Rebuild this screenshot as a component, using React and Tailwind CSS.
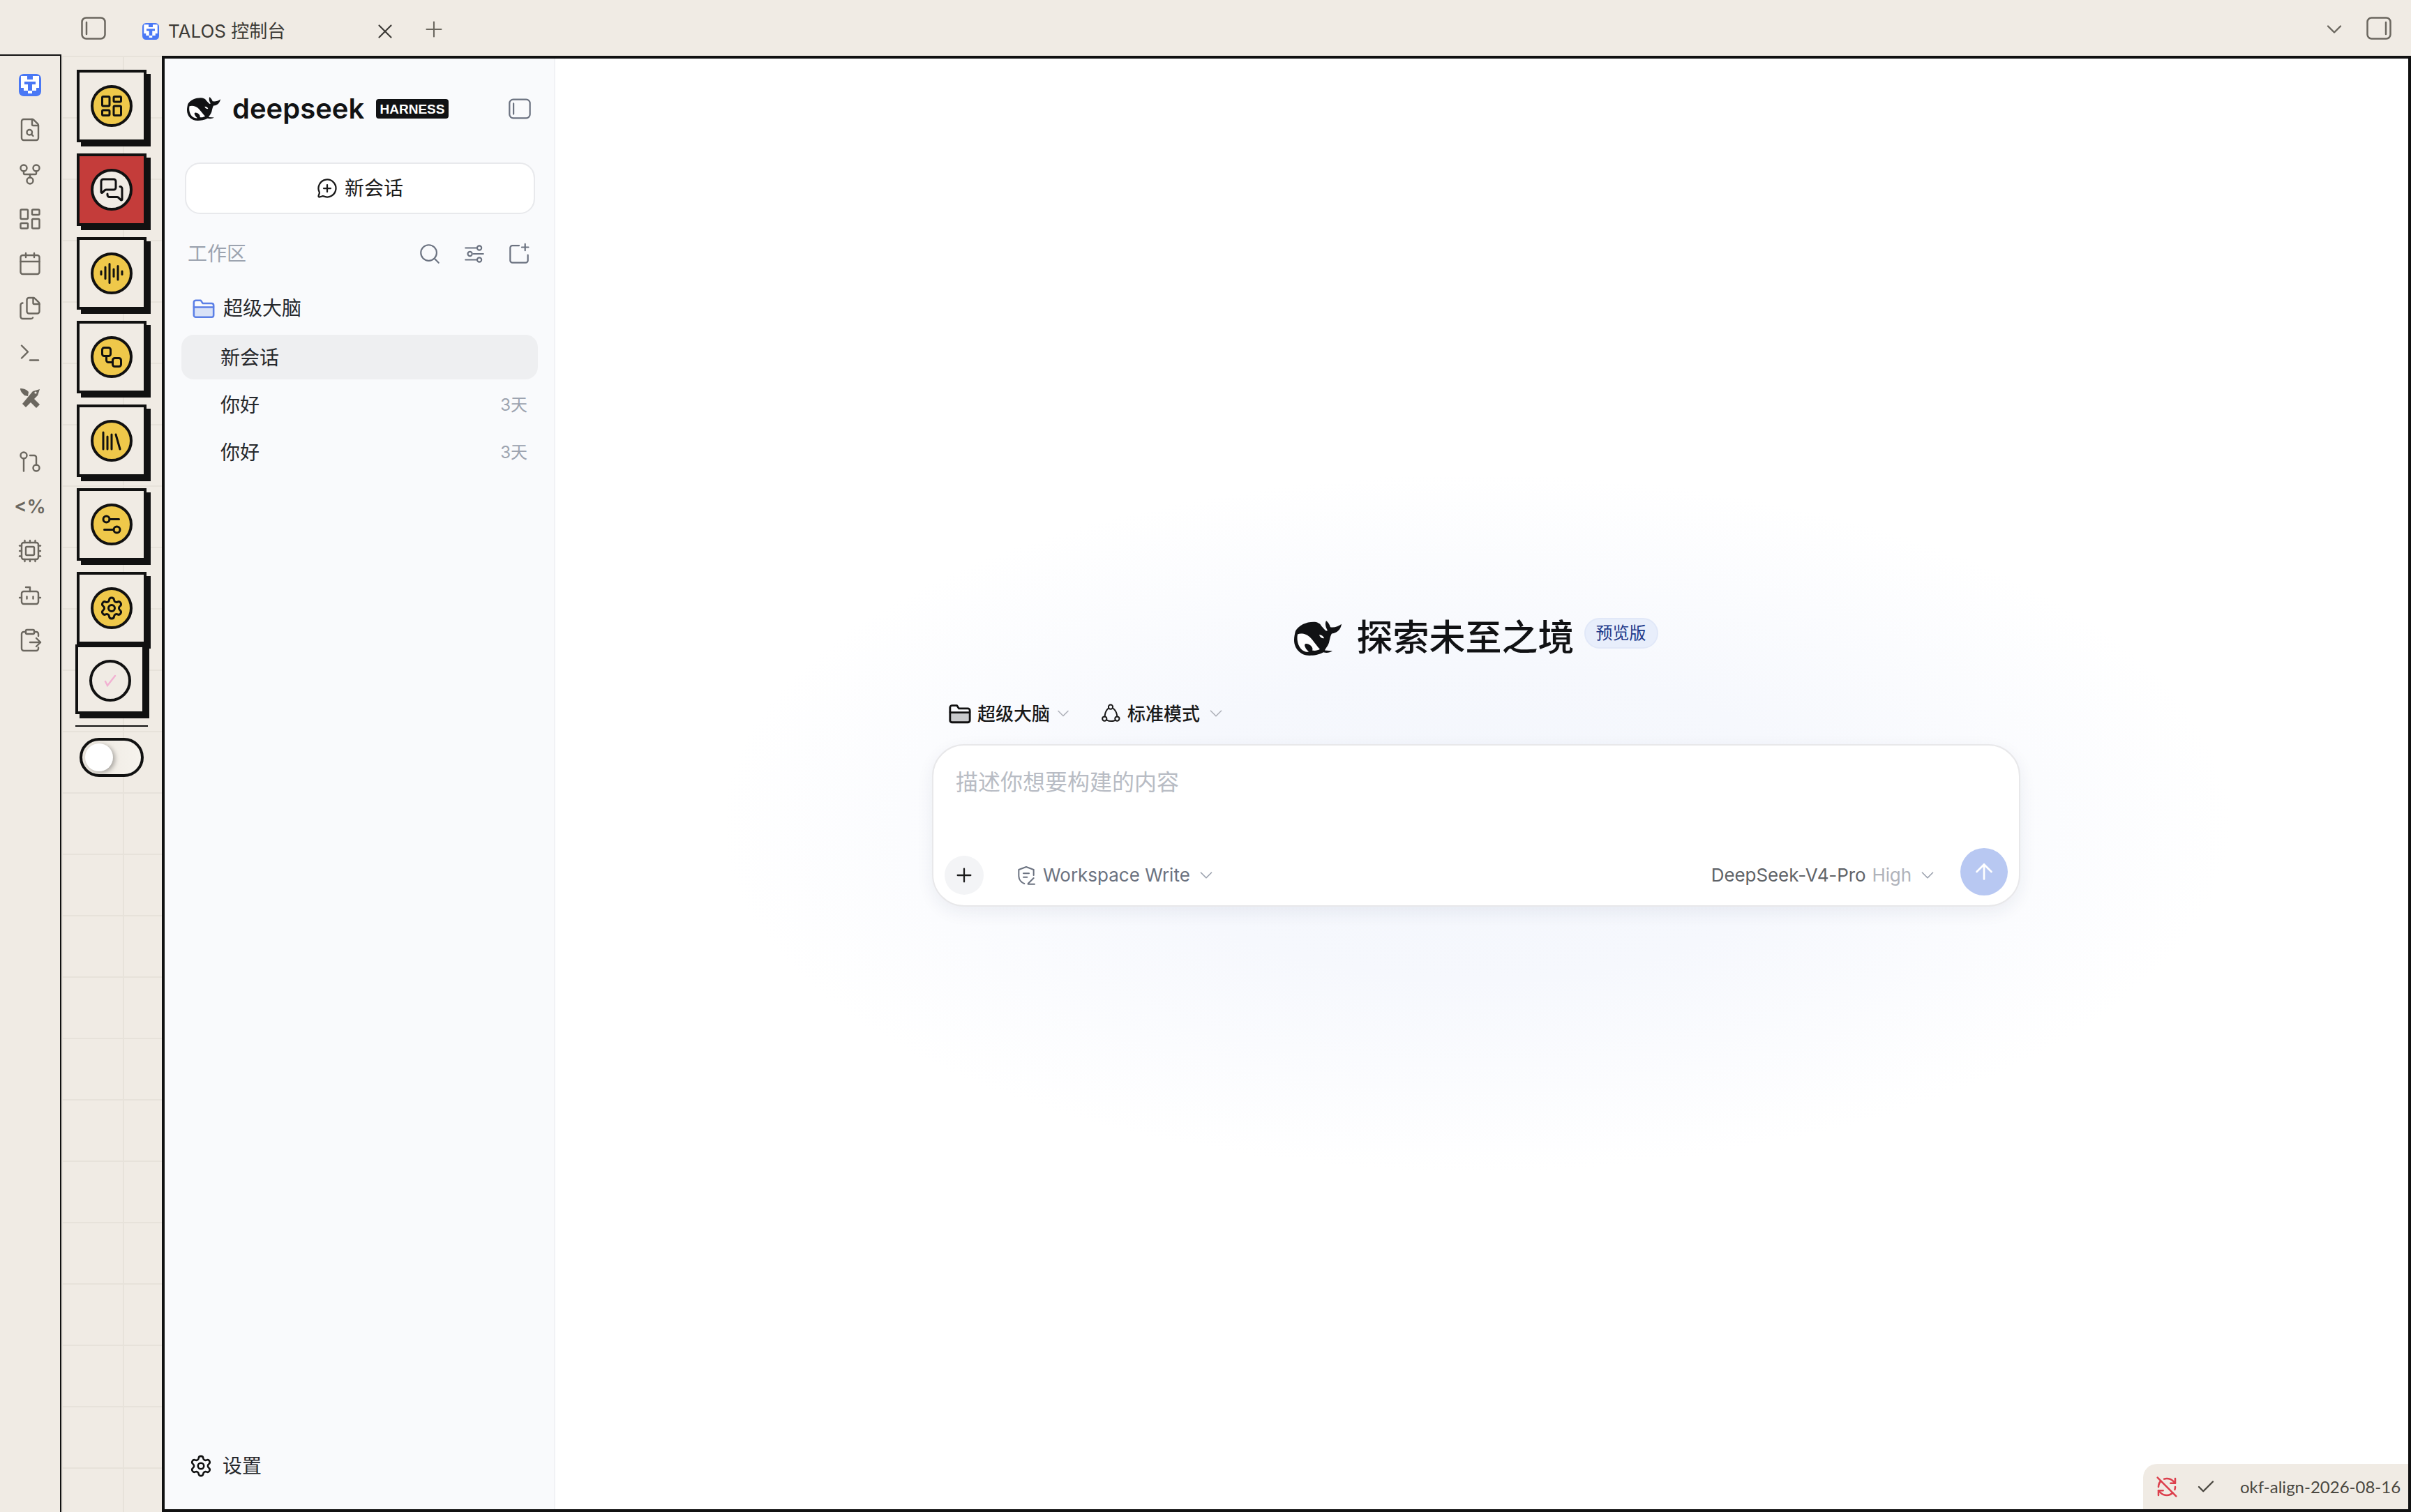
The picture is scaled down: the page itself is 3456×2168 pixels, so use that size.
import React from "react";
import {
  FileSearch, GitFork, LayoutDashboard, Calendar, Files, Terminal, Cpu, Bot,
  MessagesSquare, AudioLines, Workflow, Library, Settings2, Settings, X, Plus,
  ChevronDown, MessageCirclePlus, Search, RefreshCwOff, Check, ArrowUp,
} from "lucide-react";

const Whale = ({ className }) => (
  <svg viewBox="0 0 68 54" preserveAspectRatio="none" className={className}>
    <path fill="#111214" d="M2 16C7 7 17 2 28 2c5 0 9 2 11 6l5 6 2 2 2-1c-3-5-4-11-2-15 3 3 5 6 6 10 6 1 11-1 16-5-1 8-6 14-14 15-2 3-3 10-4 14-2 6-5 9-6 12l11 1c-4 3-9 3-13 2-6 4-14 5-20 5C9 54 0 43 0 30c0-5 1-10 2-14Z" />
    <path fill="#fff" d="M5 21c5-2 13-1 19 6 5 6 9 13 13 17-3 2-7 3-11 2 2-3-2-9-7-10-3-1-5 1-3 5 1 3 3 5 5 7-2 1-5 0-7-1C7 43 3 32 5 21Z" />
    <path fill="#fff" d="M36 22c3 0 6 2 7 5-3 1-6-1-7-5Z" />
  </svg>
);

const TalosLogo = ({ className }) => (
  <svg viewBox="0 0 32 32" className={className}>
    <rect width="32" height="32" rx="7" fill="#4a78f5" />
    <path fill="#fff" d="M3 3h9v5h8V3h9v17h-4v4h-6v4h-6v-4H7v-4H3Z" />
    <path fill="#4a78f5" d="M8 11h16v4h-5v9h-6v-9H8Z" />
  </svg>
);

const PanelIcon = ({ side = "left", className }) => (
  <svg viewBox="0 0 36 33" fill="none" stroke="currentColor" strokeWidth="2.5" strokeLinecap="round" className={className}>
    <rect x="1.5" y="1.5" width="33" height="30" rx="6" />
    {side === "left" ? <path d="M8 8v17" /> : <path d="M28 8v17" />}
  </svg>
);

const Stroke = ({ size = 36, sw = 1.6, className, children }) => (
  <svg width={size} height={size} viewBox="0 0 24 24" fill="none" stroke="currentColor" strokeWidth={sw} strokeLinecap="round" strokeLinejoin="round" className={className}>
    {children}
  </svg>
);

const PullIcon = () => (
  <Stroke>
    <circle cx="6" cy="6" r="3" /><path d="M6 9v12" /><path d="M12 6h4a2 2 0 0 1 2 2v7" /><circle cx="18" cy="18" r="3" />
  </Stroke>
);

const ClipboardOut = () => (
  <Stroke>
    <rect x="8" y="2" width="8" height="4" rx="1" />
    <path d="M16 4h2a2 2 0 0 1 2 2v2" /><path d="M8 4H6a2 2 0 0 0-2 2v14a2 2 0 0 0 2 2h12a2 2 0 0 0 2-2v-1" />
    <path d="M12 14h10" /><path d="m18 10 4 4-4 4" />
  </Stroke>
);

const Tools = () => (
  <svg viewBox="0 0 48 48" width="48" height="48" fill="#6b675f">
    <path d="M13 33 18 38 35 21 38 12 28 15Z" />
    <circle cx="32" cy="17" r="1.6" fill="#f0ebe4" />
    <path d="M10 11c4 0 9 1 12 5l-1 6-5-1c-3-3-6-6-6-10Z" />
    <path d="M28 24 38 34 33 39 23 29Z" />
  </svg>
);

const FolderFill = ({ stroke, fill, size = 34, sw = 1.8 }) => (
  <svg width={size} height={size} viewBox="0 0 24 24" fill="none" stroke={stroke} strokeWidth={sw} strokeLinejoin="round">
    <path d="M2 11V6a2 2 0 0 1 2-2h5l2 3h9a2 2 0 0 1 2 2v2" />
    <path fill={fill} d="M2 11h20v8a2 2 0 0 1-2 2H4a2 2 0 0 1-2-2Z" />
  </svg>
);

const NodesIcon = () => (
  <Stroke size={30} sw={1.6}>
    <circle cx="12" cy="4.5" r="2.5" /><circle cx="5" cy="18" r="2.5" /><circle cx="19.5" cy="18" r="2.5" />
    <path d="M9.6 6C7 8 5.6 11 5.3 15.5" /><path d="M14.6 6C17.5 8 19 11 19.5 15.5" /><path d="M7.5 19.5c2.5 1.5 6 1.8 9.5.5" />
  </Stroke>
);

const ShieldPen = () => (
  <Stroke size={32} sw={1.5}>
    <path d="M20 12V6l-8-3-8 3v7c0 4 3 7 6 8" /><path d="M9 10h6" /><path d="M9 14h4" /><path d="M14 21l6-6" /><path d="M14 21.5h7" />
  </Stroke>
);

const SlidersIcon = () => (
  <Stroke size={34} sw={1.5}>
    <path d="M3 6h11" /><circle cx="17" cy="6" r="2.2" /><path d="M3 18h11" /><circle cx="17" cy="18" r="2.2" />
    <path d="M21 12H11" /><circle cx="7.5" cy="12" r="2.2" />
  </Stroke>
);

const NewFolderIcon = () => (
  <Stroke size={38} sw={1.4}>
    <path d="M12 4.5H6a2 2 0 0 0-2 2V18a2 2 0 0 0 2 2h12a2 2 0 0 0 2-2v-5" /><path d="M17.5 3v6" /><path d="M14.5 6h6" />
  </Stroke>
);

const railTop = [
  <FileSearch size={36} strokeWidth={1.6} />,
  <GitFork size={36} strokeWidth={1.6} />,
  <LayoutDashboard size={36} strokeWidth={1.6} />,
  <Calendar size={36} strokeWidth={1.6} />,
  <Files size={36} strokeWidth={1.6} />,
  <Terminal size={36} strokeWidth={1.6} />,
  <Tools />,
];

const railBottom = [
  <PullIcon />,
  <span className="text-[27px] font-semibold leading-none">{"<%"}</span>,
  <Cpu size={36} strokeWidth={1.6} />,
  <Bot size={36} strokeWidth={1.6} />,
  <ClipboardOut />,
];

const neo = [
  { icon: LayoutDashboard },
  { icon: MessagesSquare, active: true },
  { icon: AudioLines },
  { icon: Workflow },
  { icon: Library },
  { icon: Settings2 },
  { icon: Settings },
];

const Rail = () => (
  <div className="w-[88px] shrink-0 border-t-2 border-r-2 border-[#111] pt-[10px] flex flex-col items-center text-[#6b675f]">
    <div className="h-[64px] flex items-center justify-center"><TalosLogo className="w-[32px] h-[32px]" /></div>
    {railTop.map((icon, i) => (
      <div key={i} className="h-[64px] flex items-center justify-center">{icon}</div>
    ))}
    <div className="mt-[28px] flex flex-col items-center">
      {railBottom.map((icon, i) => (
        <div key={i} className="h-[64px] flex items-center justify-center">{icon}</div>
      ))}
    </div>
  </div>
);

const NeoColumn = () => (
  <div className="mt-[2px] w-[144px] shrink-0 pt-[20px] flex flex-col items-center gap-[16px] bg-[linear-gradient(#e7e2da_2px,transparent_2px),linear-gradient(90deg,#e7e2da_2px,transparent_2px)] bg-[size:88px_88px]">
    {neo.map(({ icon: Icon, active }, i) => (
      <div key={i} className={`w-[100px] h-[104px] border-[4px] border-[#111] shadow-[6px_6px_0_#111] flex items-center justify-center ${active ? "bg-[#c43c3a]" : "bg-[#f0ebe4]"}`}>
        <div className={`w-[60px] h-[60px] rounded-full border-[4px] border-[#111] flex items-center justify-center text-[#111] ${active ? "bg-[#f0ebe4]" : "bg-[#efc84a]"}`}>
          <Icon size={36} strokeWidth={2} />
        </div>
      </div>
    ))}
    <div className="-mt-[16px] -translate-x-[2px] w-[100px] h-[100px] border-[4px] border-[#111] shadow-[6px_6px_0_#111] bg-[#f0ebe4] flex items-center justify-center">
      <div className="mt-[4px] w-[60px] h-[60px] rounded-full border-[4px] border-[#111] flex items-center justify-center">
        <svg width="18" height="18" viewBox="0 0 18 18" fill="none" stroke="#f2b1d2" strokeWidth="2.4" strokeLinecap="round"><path d="M2 10l3 6L16 2" /></svg>
      </div>
    </div>
    <div className="w-[104px] h-[2px] bg-[#111]" />
    <div className="w-[92px] h-[56px] rounded-full border-[4px] border-[#111] bg-[linear-gradient(90deg,#ece7df,#f6f3ed)] flex items-center pl-[4px]">
      <div className="w-[40px] h-[40px] rounded-full bg-white shadow-[3px_2px_6px_rgba(0,0,0,0.3)]" />
    </div>
  </div>
);

const Row = ({ label, age, active }) => (
  <div className={`h-[64px] rounded-[18px] pl-[56px] pr-[15px] pt-[2px] flex items-center justify-between text-[28px] text-[#26282c] ${active ? "bg-[#eeeff1]" : ""}`}>
    <span>{label}</span>
    {age && <span className="text-[24px] text-[#9ca3af]">{age}</span>}
  </div>
);

const Sidebar = () => (
  <aside className="w-[560px] shrink-0 bg-[#f9fafc] border-r-2 border-[#f1f2f5] flex flex-col">
    <div className="mt-[36px] h-[72px] pl-[32px] pr-[33px] flex items-center">
      <Whale className="w-[48px] h-[34px]" />
      <span className="ml-[17px] w-[190px] text-[40px] font-semibold leading-none text-[#111214]">deepseek</span>
      <span className="ml-[16px] w-[104px] h-[28px] rounded-[4px] bg-[#111214] flex items-center justify-center font-['Liberation_Sans'] text-[19px] font-bold text-white leading-none">HARNESS</span>
      <PanelIcon className="ml-auto w-[32px] h-[30px] text-[#6b7280]" />
    </div>
    <div className="mt-[41px] ml-[29px] mr-[27px] h-[74px] rounded-[22px] border-2 border-[#e8e9ec] bg-white flex items-center justify-center gap-[10px] text-[28px] text-[#1a1a1a]">
      <MessageCirclePlus size={30} strokeWidth={1.8} />
      <span>新会话</span>
    </div>
    <div className="mt-[37px] h-[40px] pl-[33px] pr-[30px] flex items-center text-[#6b7280]">
      <span className="text-[28px] text-[#9ca3af]">工作区</span>
      <div className="ml-auto flex items-center gap-[24px]">
        <div className="w-[40px] flex justify-center"><Search size={34} strokeWidth={1.5} /></div>
        <div className="w-[40px] flex justify-center"><SlidersIcon /></div>
        <div className="w-[40px] flex justify-center"><NewFolderIcon /></div>
      </div>
    </div>
    <div className="mt-[38px] h-[40px] pl-[39px] flex items-center gap-[11px] text-[28px] text-[#26282c]">
      <FolderFill stroke="#5b7fe6" fill="#d9e2f7" />
      <span>超级大脑</span>
    </div>
    <div className="mt-[18px] ml-[24px] mr-[23px] flex flex-col gap-[4px]">
      <Row label="新会话" active />
      <Row label="你好" age="3天" />
      <Row label="你好" age="3天" />
    </div>
    <div className="mt-auto mb-[42px] h-[40px] pl-[35px] flex items-center gap-[14px] text-[28px] text-[#26282c]">
      <Settings size={34} strokeWidth={1.8} className="text-[#111]" />
      <span>设置</span>
    </div>
  </aside>
);

const Composer = () => (
  <div className="ml-[540px] w-[1560px] pt-[800px]">
    <div className="h-[62px] flex items-center justify-center">
      <Whale className="w-[68px] h-[50px]" />
      <h1 className="ml-[21px] text-[52px] font-medium leading-none text-[#111214]">探索未至之境</h1>
      <span className="ml-[14px] -mt-[14px] w-[106px] h-[44px] rounded-full border-2 border-[#e1e8f8] bg-[#e8eefb] flex items-center justify-center text-[24px] text-[#1e3a8a]">预览版</span>
    </div>
    <div className="mt-[57px] h-[40px] pl-[23px] flex items-center text-[26px] font-medium text-[#1a1a1a]">
      <FolderFill stroke="#111" fill="#c9cacc" sw={2} />
      <span className="ml-[8px]">超级大脑</span>
      <ChevronDown size={28} strokeWidth={1.4} className="ml-[5px] text-[#b0b3bb]" />
      <span className="ml-[39px] flex"><NodesIcon /></span>
      <span className="ml-[9px]">标准模式</span>
      <ChevronDown size={30} strokeWidth={1.4} className="ml-[8px] text-[#b0b3bb]" />
    </div>
    <div className="mt-[24px] h-[233px] rounded-[46px] border-2 border-[#e8e8ea] bg-white shadow-[0_8px_24px_rgba(30,40,80,0.07)] flex flex-col">
      <div className="pt-[30px] pl-[32px] text-[32px] leading-[46px] text-[#b8bcc4]">描述你想要构建的内容</div>
      <div className="mt-auto mb-[14px] pl-[16px] pr-[16px] flex items-center">
        <div className="w-[56px] h-[56px] rounded-full bg-[#f3f4f6] flex items-center justify-center text-[#1a1a1a]">
          <Plus size={32} strokeWidth={1.7} />
        </div>
        <div className="ml-[45px] flex items-center text-[26px] text-[#6b7280]">
          <ShieldPen />
          <span className="ml-[8px]">Workspace Write</span>
          <ChevronDown size={30} strokeWidth={1.4} className="ml-[8px] text-[#9ca3af]" />
        </div>
        <div className="ml-auto flex items-center text-[26px] tracking-[-0.1px] text-[#5f6368]">
          <span>DeepSeek-V4-Pro</span>
          <span className="ml-[9px] text-[#b0b3bb]">High</span>
          <ChevronDown size={30} strokeWidth={1.4} className="ml-[8px] text-[#9ca3af]" />
        </div>
        <div className="ml-[32px] -mt-[9px] w-[68px] h-[68px] rounded-full bg-[#b8c8f2] flex items-center justify-center text-white">
          <ArrowUp size={36} strokeWidth={1.8} />
        </div>
      </div>
    </div>
  </div>
);

export default function App() {
  return (
    <div className="w-[3456px] h-[2168px] flex flex-col overflow-hidden bg-[#f0ebe4] font-[Inter,'Noto_Sans_CJK_SC',sans-serif]">
      <header className="h-[78px] shrink-0 pl-[116px] pr-[28px] flex items-center text-[#6b675f]">
        <PanelIcon className="w-[36px] h-[33px] mt-[2px]" />
        <div className="ml-[52px] mt-[12px] w-[365px] flex items-center">
          <TalosLogo className="w-[24px] h-[24px]" />
          <span className="ml-[13px] text-[26px] leading-none text-[#3c3a36]">TALOS 控制台</span>
          <X size={34} strokeWidth={1.5} className="ml-auto text-[#3c3a36]" />
        </div>
        <Plus size={36} strokeWidth={1.4} className="ml-[35px] mt-[6px]" />
        <ChevronDown size={36} strokeWidth={1.6} className="ml-auto mt-[6px]" />
        <PanelIcon side="right" className="ml-[28px] w-[36px] h-[33px] mt-[2px]" />
      </header>
      <div className="flex-1 flex min-h-0">
        <Rail />
        <NeoColumn />
        <main className="mt-[2px] flex-1 min-w-0 border-[4px] border-[#111] bg-white flex relative overflow-hidden">
          <Sidebar />
          <section className="flex-1 min-w-0 bg-[radial-gradient(ellipse_1080px_500px_at_1320px_1096px,#f3f6fc_0%,#f6f8fd_45%,#ffffff_100%)]">
            <Composer />
          </section>
          <div className="absolute right-0 bottom-0 w-[380px] h-[65px] rounded-tl-[20px] bg-[#f0ebe4] flex items-center pl-[18px] text-[24px] text-[#4a4740] font-[Lato,'Noto_Sans_CJK_SC',sans-serif]">
            <RefreshCwOff size={32} strokeWidth={1.9} className="text-[#dc3f4c]" />
            <Check size={30} strokeWidth={1.9} className="ml-[25px]" />
            <span className="ml-[34px]">okf-align-2026-08-16</span>
          </div>
        </main>
      </div>
    </div>
  );
}
